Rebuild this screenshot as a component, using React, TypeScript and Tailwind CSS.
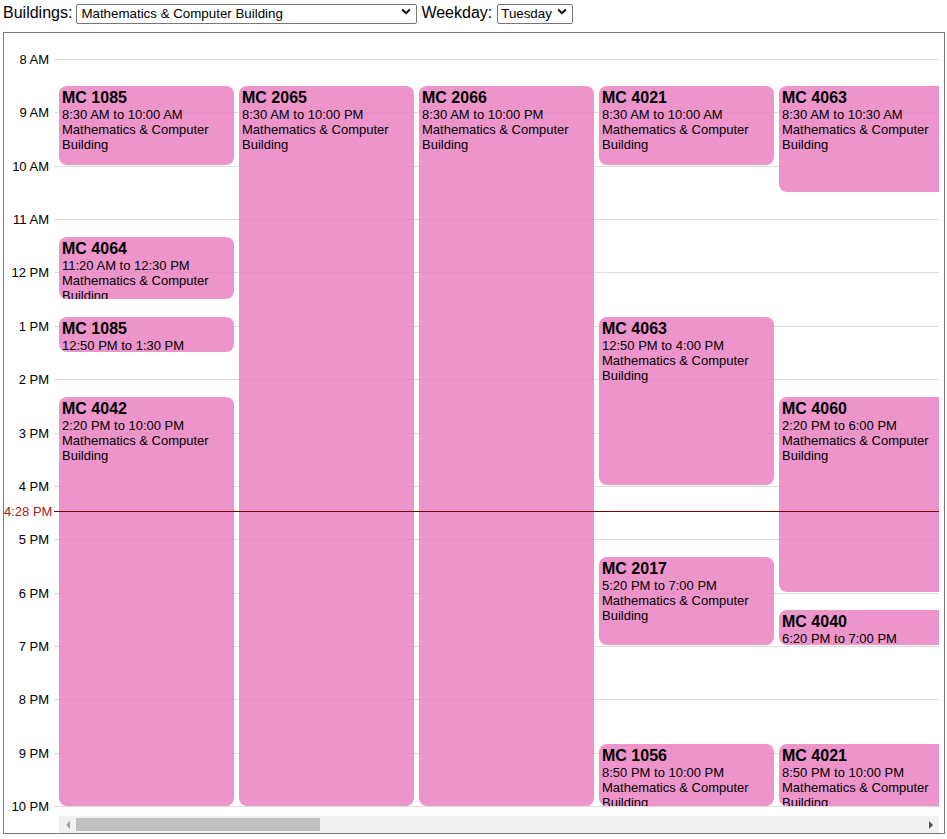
import { useState } from "react";

type Ev = { room: string; start: number; end: number; time: string; building?: boolean };

const HOUR = 53.36;
const hours = ["8 AM", "9 AM", "10 AM", "11 AM", "12 PM", "1 PM", "2 PM", "3 PM", "4 PM", "5 PM", "6 PM", "7 PM", "8 PM", "9 PM", "10 PM"];

const columns: Ev[][] = [
  [
    { room: "MC 1085", start: 8.5, end: 10, time: "8:30 AM to 10:00 AM", building: true },
    { room: "MC 4064", start: 11 + 20 / 60, end: 12.5, time: "11:20 AM to 12:30 PM", building: true },
    { room: "MC 1085", start: 12 + 50 / 60, end: 13.5, time: "12:50 PM to 1:30 PM" },
    { room: "MC 4042", start: 14 + 20 / 60, end: 22, time: "2:20 PM to 10:00 PM", building: true },
  ],
  [{ room: "MC 2065", start: 8.5, end: 22, time: "8:30 AM to 10:00 PM", building: true }],
  [{ room: "MC 2066", start: 8.5, end: 22, time: "8:30 AM to 10:00 PM", building: true }],
  [
    { room: "MC 4021", start: 8.5, end: 10, time: "8:30 AM to 10:00 AM", building: true },
    { room: "MC 4063", start: 12 + 50 / 60, end: 16, time: "12:50 PM to 4:00 PM", building: true },
    { room: "MC 2017", start: 17 + 20 / 60, end: 19, time: "5:20 PM to 7:00 PM", building: true },
    { room: "MC 1056", start: 20 + 50 / 60, end: 22, time: "8:50 PM to 10:00 PM", building: true },
  ],
  [
    { room: "MC 4063", start: 8.5, end: 10.5, time: "8:30 AM to 10:30 AM", building: true },
    { room: "MC 4060", start: 14 + 20 / 60, end: 18, time: "2:20 PM to 6:00 PM", building: true },
    { room: "MC 4040", start: 18 + 20 / 60, end: 19, time: "6:20 PM to 7:00 PM" },
    { room: "MC 4021", start: 20 + 50 / 60, end: 22, time: "8:50 PM to 10:00 PM", building: true },
  ],
  [
    { room: "MC 3003", start: 8.5, end: 22, time: "8:30 AM to 10:00 PM", building: true },
  ],
];

const Chevron = () => (
  <svg width="10" height="7" viewBox="0 0 10 7" className="pointer-events-none absolute right-[6px] top-[7px]">
    <path d="M1.2 1.5 L5 5.2 L8.8 1.5" fill="none" stroke="#000" strokeWidth="1.9" />
  </svg>
);

export default function App() {
  const [building, setBuilding] = useState("mc");
  const [day, setDay] = useState("tue");
  const now = 16 + 28 / 60;

  return (
    <div className="font-['Liberation_Sans',Arial,sans-serif] text-black bg-white w-[947px] h-[839px] overflow-hidden">
      <div className="flex items-center h-[25px] pl-[3px] text-[16px]">
        <span>Buildings:</span>
        <div className="relative ml-[4px]">
          <select
            value={building}
            onChange={(e) => setBuilding(e.target.value)}
            className="appearance-none w-[341px] h-[20px] border border-[#767676] rounded-[2px] bg-white pl-[4px] text-[13.33px] leading-[18px] text-black"
          >
            <option value="mc">Mathematics &amp; Computer Building</option>
            <option value="dc">Davis Centre</option>
          </select>
          <Chevron />
        </div>
        <span className="ml-[4px]">Weekday:</span>
        <div className="relative ml-[5px]">
          <select
            value={day}
            onChange={(e) => setDay(e.target.value)}
            className="appearance-none w-[76px] h-[20px] border border-[#767676] rounded-[2px] bg-white pl-[3px] text-[13.33px] leading-[18px] text-black"
          >
            <option value="mon">Monday</option>
            <option value="tue">Tuesday</option>
            <option value="wed">Wednesday</option>
          </select>
          <Chevron />
        </div>
      </div>

      <div className="relative ml-[3px] mt-[7px] w-[942px] border border-[#7a7a7a]">
        <div className="pt-[26px] pb-[9px]">
          {hours.map((h, i) => (
            <div key={h} className={`flex ${i === hours.length - 1 ? "h-px" : "h-[53.36px]"}`}>
              <div className="w-[50px] pr-[5px] text-right text-[13px] leading-[15px] relative -top-[7px]">{h}</div>
              <div className="flex-1 mr-[5px] border-t border-[#dddddd]" />
            </div>
          ))}
        </div>

        <div className="absolute top-[26px] left-[55px] right-[5px] h-[747px] overflow-hidden">
          <div className="flex gap-[5px] h-full w-max">
            {columns.map((col, ci) => (
              <div key={ci} className="relative w-[175px] h-full shrink-0">
                {col.map((ev, ei) => (
                  <div
                    key={ei}
                    className="absolute left-0 right-0 rounded-[8px] bg-[rgba(234,131,194,0.85)] overflow-hidden pt-[3px] px-[3px]"
                    style={{ top: (ev.start - 8) * HOUR, height: (ev.end - ev.start) * HOUR - 0.5 }}
                  >
                    <div className="text-[16px] leading-[18px] font-bold">{ev.room}</div>
                    <div className="text-[13px] leading-[15px]">{ev.time}</div>
                    {ev.building && (
                      <div className="text-[13px] leading-[15px]">Mathematics &amp; Computer Building</div>
                    )}
                  </div>
                ))}
              </div>
            ))}
          </div>
        </div>

        <div
          className="absolute left-0 right-[5px] flex items-center"
          style={{ top: 26 + (now - 8) * HOUR - 7 }}
        >
          <div className="w-[50px] text-[13px] leading-[15px] text-[#a52222] whitespace-nowrap">4:28 PM</div>
          <div className="flex-1 h-px bg-[#6e0a0a]" />
        </div>

        <div className="ml-[55px] mr-[5px] h-[17px] bg-[#f1f1f1] flex items-center">
          <div className="w-[17px] h-full flex items-center justify-center">
            <div className="w-0 h-0 border-y-[4px] border-y-transparent border-r-[4px] border-r-[#a3a3a3]" />
          </div>
          <div className="w-[244px] h-[13px] bg-[#c1c1c1]" />
          <div className="flex-1" />
          <div className="w-[17px] h-full flex items-center justify-center">
            <div className="w-0 h-0 border-y-[4px] border-y-transparent border-l-[4px] border-l-[#505050]" />
          </div>
        </div>
      </div>
    </div>
  );
}
